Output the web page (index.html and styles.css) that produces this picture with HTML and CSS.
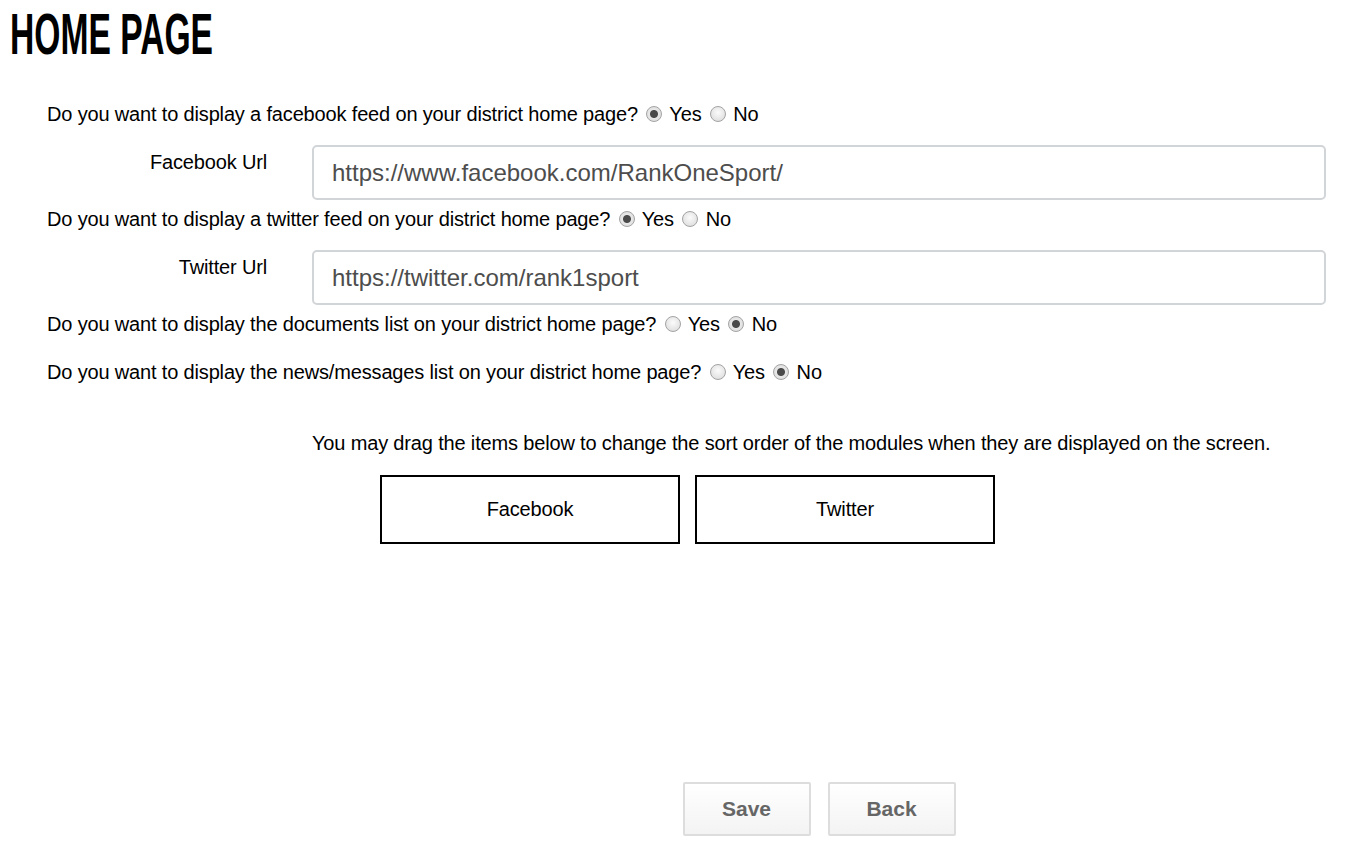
FILE: index.html
```html
<html>
<head>
    <link rel="stylesheet" href="styles.css">
</head>
<body>
    <h1 class="title"><span>HOME PAGE</span></h1>

    <section class="settings">
        <div class="question">
            Do you want to display a facebook feed on your district home page?
            <label class="choice"><input type="radio" name="fb" checked> Yes</label>
            <label class="choice"><input type="radio" name="fb"> No</label>
        </div>
        <div class="field-row">
            <div class="field-label">Facebook Url</div>
            <input class="url" type="text" value="https://www.facebook.com/RankOneSport/">
        </div>

        <div class="question">
            Do you want to display a twitter feed on your district home page?
            <label class="choice"><input type="radio" name="tw" checked> Yes</label>
            <label class="choice"><input type="radio" name="tw"> No</label>
        </div>
        <div class="field-row">
            <div class="field-label">Twitter Url</div>
            <input class="url" type="text" value="https://twitter.com/rank1sport">
        </div>

        <div class="question">
            Do you want to display the documents list on your district home page?
            <label class="choice"><input type="radio" name="docs"> Yes</label>
            <label class="choice"><input type="radio" name="docs" checked> No</label>
        </div>
        <div class="question last">
            Do you want to display the news/messages list on your district home page?
            <label class="choice"><input type="radio" name="news"> Yes</label>
            <label class="choice"><input type="radio" name="news" checked> No</label>
        </div>

        <div class="sort-area">
            <p class="sort-note">You may drag the items below to change the sort order of the modules when they are displayed on the screen.</p>
            <div class="modules">
                <div class="module">Facebook</div>
                <div class="module">Twitter</div>
            </div>
        </div>

        <div class="actions">
            <button class="btn">Save</button>
            <button class="btn">Back</button>
        </div>
    </section>
</body>
</html>
```

FILE: styles.css
```css
body {
    margin: 0;
    font-family: "Liberation Sans", Arial, sans-serif;
    color: #000;
    background: #fff;
    letter-spacing: -0.16px;
}
.title {
    margin: 0;
    padding: 4px 0 0 10px;
    height: 91px;
    font-family: "Liberation Sans Narrow", "Liberation Sans", sans-serif;
    font-weight: bold;
    font-size: 57px;
    line-height: 60px;
    letter-spacing: 0;
}
.title span {
    display: inline-block;
    transform: scaleX(0.59);
    transform-origin: left center;
}
.settings {
    padding-left: 47px;
    width: 1279px;
}
.question {
    font-size: 20px;
    height: 38px;
    line-height: 38px;
    white-space: nowrap;
}
.question.last {margin-top: 10px;}
.choice input {
    -webkit-appearance: none;
    appearance: none;
    width: 16px;
    height: 16px;
    margin: 0 2px 0 3px;
    border: 1px solid #a3a3a3;
    border-radius: 50%;
    background: radial-gradient(circle at 50% 40%, #fbfbfb, #d8d8d8);
    vertical-align: -1px;
}
.choice input:checked {
    background: radial-gradient(circle, #4a4a4a 0, #4a4a4a 3.5px, #e8e8e8 4.5px, #d8d8d8 100%);
}
.field-row {
    display: flex;
    align-items: flex-start;
    gap: 45px;
    margin-top: 12px;
}
.field-label {
    width: 220px;
    text-align: right;
    font-size: 20px;
    padding-top: 6px;
}
.url {
    flex: 1;
    height: 55px;
    box-sizing: border-box;
    border: 2px solid #d2d5d8;
    border-radius: 5px;
    padding: 0 18px;
    font-family: "Liberation Sans", Arial, sans-serif;
    font-size: 24px;
    color: #4d4d4d;
}
.sort-area {
    margin: 38px 0 0 265px;
}
.sort-note {
    margin: 0;
    font-size: 20px;
    line-height: 28px;
}
.modules {
    display: flex;
    gap: 15px;
    margin: 18px 0 0 68px;
}
.module {
    width: 296px;
    height: 65px;
    border: 2px solid #000;
    display: flex;
    align-items: center;
    justify-content: center;
    font-size: 20px;
}
.actions {
    margin: 238px 0 0 265px;
    display: flex;
    justify-content: center;
    gap: 17px;
}
.btn {
    width: 128px;
    height: 54px;
    border: 2px solid #ddd;
    border-radius: 2px;
    background: linear-gradient(#fff, #f3f3f3);
    font-family: "Liberation Sans", Arial, sans-serif;
    font-weight: bold;
    font-size: 21px;
    color: #666;
}
```
